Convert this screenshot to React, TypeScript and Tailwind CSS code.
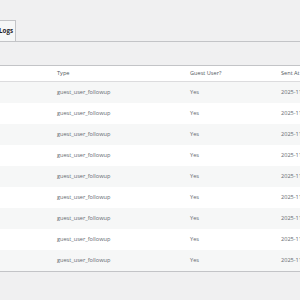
import React from 'react';

const rows = Array.from({ length: 9 }, () => ({
  type: 'guest_user_followup',
  guest: 'Yes',
  sent: '2025-11-04 09:12:33',
}));

export default function App() {
  return (
    <div
      className="w-[300px] h-[300px] overflow-hidden bg-[#f0f0f1] text-[5.6px] text-[#646970]"
      style={{ fontFamily: '"Open Sans", "Liberation Sans", sans-serif' }}
    >
      {/* Tabs */}
      <div className="pt-[20px] border-b border-[#c3c4c7] flex">
        <div className="w-[16px] h-[21px] bg-[#f6f7f7] border border-b-0 border-l-0 border-[#c3c4c7] flex items-center justify-end pr-[2px] overflow-hidden">
          <span className="font-bold text-[#1d2327] whitespace-nowrap text-[6.2px]">Logs</span>
        </div>
      </div>

      {/* Table */}
      <div className="mt-[23px] bg-white border-y border-[#c3c4c7]">
        <div className="grid grid-cols-[57px_133px_91px_1fr] h-[16px] items-center border-b border-[#dcdcde] text-[#50575e] whitespace-nowrap">
          <div />
          <div>Type</div>
          <div>Guest User?</div>
          <div>Sent At</div>
        </div>
        {rows.map((r, i) => (
          <div
            key={i}
            className={`grid grid-cols-[57px_133px_91px_1fr] h-[21px] items-center whitespace-nowrap ${
              i % 2 === 0 ? 'bg-[#f6f7f7]' : 'bg-white'
            }`}
          >
            <div />
            <div>{r.type}</div>
            <div>{r.guest}</div>
            <div>{r.sent}</div>
          </div>
        ))}
      </div>
    </div>
  );
}
